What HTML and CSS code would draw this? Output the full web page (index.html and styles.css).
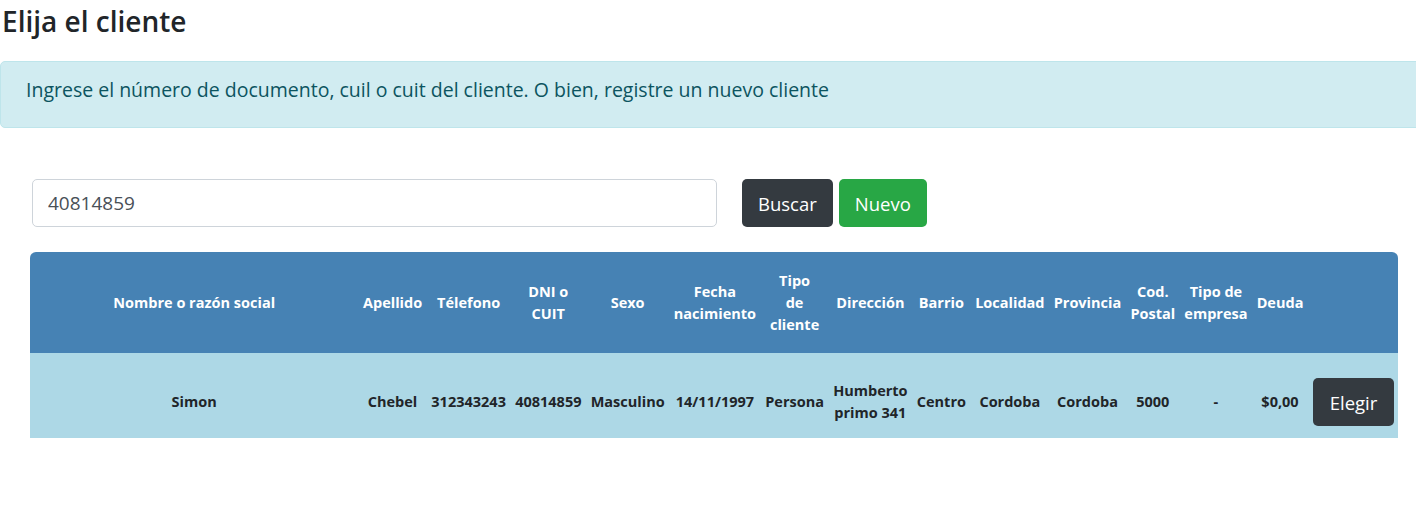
FILE: index.html
```html
<!DOCTYPE html>
<html lang="es">
<head>
<meta charset="utf-8">
<title>Elija el cliente</title>
<link rel="stylesheet" href="styles.css">
</head>
<body>
<div class="page">
  <h4 class="title">Elija el cliente</h4>
  <div class="alert">Ingrese el número de documento, cuil o cuit del cliente. O bien, registre un nuevo cliente</div>
  <div class="search">
    <input class="input" type="text" value="40814859">
    <div class="actions">
      <button class="btn btn-dark">Buscar</button>
      <button class="btn btn-green">Nuevo</button>
    </div>
  </div>
  <table class="clients">
    <thead>
      <tr>
        <th class="first">Nombre o razón social</th>
        <th>Apellido</th>
        <th>Télefono</th>
        <th>DNI o CUIT</th>
        <th>Sexo</th>
        <th>Fecha nacimiento</th>
        <th>Tipo<br>de<br>cliente</th>
        <th>Dirección</th>
        <th>Barrio</th>
        <th>Localidad</th>
        <th>Provincia</th>
        <th>Cod. Postal</th>
        <th>Tipo de empresa</th>
        <th>Deuda</th>
        <th class="last"></th>
      </tr>
    </thead>
    <tbody>
      <tr>
        <td>Simon</td>
        <td>Chebel</td>
        <td>312343243</td>
        <td>40814859</td>
        <td>Masculino</td>
        <td>14/11/1997</td>
        <td>Persona</td>
        <td>Humberto primo 341</td>
        <td>Centro</td>
        <td>Cordoba</td>
        <td>Cordoba</td>
        <td>5000</td>
        <td>-</td>
        <td>$0,00</td>
        <td class="last"><button class="btn btn-dark">Elegir</button></td>
      </tr>
    </tbody>
  </table>
</div>
</body>
</html>
```

FILE: styles.css
```css
html, body {
  margin: 0;
  padding: 0;
  background: #fff;
  overflow: hidden;
}

.page {
  font-family: "Open Sans", "Noto Sans", sans-serif;
  color: #212529;
  width: 1416px;
  height: 524px;
  overflow: hidden;
}

.title {
  margin: 0 0 0 2px;
  padding-top: 3px;
  font-size: 28px;
  font-weight: 600;
  line-height: 36px;
}

.alert {
  margin-top: 22px;
  width: 1460px;
  box-sizing: border-box;
  height: 67px;
  padding: 0 25px 10px;
  display: flex;
  align-items: center;
  background: #d1ecf1;
  border: 1px solid #bee5eb;
  border-radius: 5px;
  color: #0c5460;
  font-size: 19.5px;
}

.search {
  display: flex;
  align-items: center;
  gap: 25px;
  margin: 51px 0 0 32px;
}

.input {
  width: 685px;
  height: 48px;
  box-sizing: border-box;
  border: 1px solid #ced4da;
  border-radius: 5px;
  padding: 0 15px;
  font-family: inherit;
  font-size: 19px;
  color: #495057;
}

.actions {
  display: flex;
  gap: 6px;
}

.btn {
  height: 48px;
  box-sizing: border-box;
  border: none;
  border-radius: 5px;
  padding: 0 16px;
  font-family: inherit;
  font-size: 18.5px;
  color: #fff;
}

.btn-dark {
  background: #343a40;
}

.btn-green {
  background: #28a745;
}

.clients {
  margin: 25px 0 0 30px;
  width: 1368px;
  border-collapse: separate;
  border-spacing: 0;
  font-size: 14.5px;
  font-weight: 700;
  line-height: 22px;
  text-align: center;
}

.clients th,
.clients td {
  padding: 0 4.6px;
  vertical-align: middle;
}

.clients th.first {
  width: 100%;
}

.clients thead th {
  background: #4682b4;
  color: #fff;
  height: 101px;
  box-sizing: border-box;
}

.clients thead th.first {
  border-top-left-radius: 6px;
}

.clients thead th.last {
  border-top-right-radius: 6px;
}

.clients tbody td {
  background: #add8e6;
  color: #212529;
  padding-top: 25px;
  padding-bottom: 12px;
}

.clients th.last,
.clients td.last {
  padding-left: 5px;
  padding-right: 4px;
}

.clients tbody td .btn {
  width: 81px;
  padding: 0;
  font-weight: 400;
  display: block;
}
```
